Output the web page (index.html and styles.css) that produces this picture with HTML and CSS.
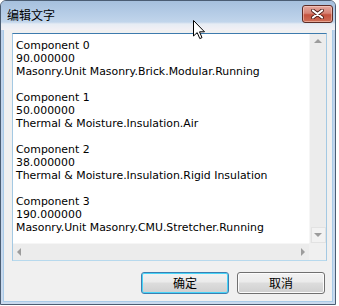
FILE: index.html
```html
<!DOCTYPE html>
<html lang="zh-CN">
  <head>
    <meta charset="UTF-8" />
    <title>编辑文字</title>
    <link rel="stylesheet" href="styles.css">
  </head>
  <body>
    <div class="window">
      <div class="titlebar">
        <span class="title">编辑文字</span>
        <button class="close" title="关闭">
          <svg width="15" height="10" viewBox="0 0 15 10">
            <path d="M3 1.5 L12 8.5 M12 1.5 L3 8.5" stroke="#4a1a14" stroke-width="3.8" stroke-linecap="round" />
            <path d="M3 1.5 L12 8.5 M12 1.5 L3 8.5" stroke="#ffffff" stroke-width="2.2" stroke-linecap="round" />
          </svg>
        </button>
      </div>

      <div class="client">
        <div class="textbox">
          <div class="content">
            <div>Component 0</div>
            <div>90.000000</div>
            <div>Masonry.Unit Masonry.Brick.Modular.Running</div>
            <div>&nbsp;</div>
            <div>Component 1</div>
            <div>50.000000</div>
            <div>Thermal &amp; Moisture.Insulation.Air</div>
            <div>&nbsp;</div>
            <div>Component 2</div>
            <div>38.000000</div>
            <div>Thermal &amp; Moisture.Insulation.Rigid Insulation</div>
            <div>&nbsp;</div>
            <div>Component 3</div>
            <div>190.000000</div>
            <div>Masonry.Unit Masonry.CMU.Stretcher.Running</div>
          </div>
          <!-- 滚动条（禁用状态） -->
          <div class="vscroll">
            <div class="arrow up"></div>
            <div class="arrow-btn"><div class="arrow down"></div></div>
          </div>
          <div class="hscroll">
            <div class="arrow left"></div>
            <div class="arrow right"></div>
          </div>
          <div class="corner"></div>
        </div>

        <div class="actions">
          <button class="btn default">确定</button>
          <button class="btn">取消</button>
        </div>
      </div>

      <svg class="cursor" width="13" height="20" viewBox="0 0 13 20">
        <path d="M0.5 0.5 L0.5 16 L4.2 12.6 L6.8 18.6 L9 17.6 L6.5 11.8 L11.5 11.8 Z" fill="#ffffff" stroke="#000000" stroke-width="1" stroke-linejoin="miter" />
      </svg>
    </div>
  </body>
</html>
```

FILE: styles.css
```css
body {
  margin: 0;
  background: #ffffff;
}

.window {
  position: relative;
  width: 336px;
  height: 305px;
  box-sizing: border-box;
  border: 1px solid #4b5d73;
  border-radius: 6px 6px 0 0;
  padding: 0 2px 2px 2px;
  background: linear-gradient(#bcd1ea, #c9daee);
  display: flex;
  flex-direction: column;
  font-family: "DejaVu Sans", sans-serif;
}

.titlebar {
  height: 29px;
  margin: 0 -2px;
  padding: 0 2px 0 6px;
  display: flex;
  align-items: flex-start;
  justify-content: space-between;
  background: linear-gradient(#a6c0dd 0px, #b5cce6 12px, #c1d5eb 21px, #e6ecf4 23px, #f2f0f5 29px);
  border-radius: 5px 5px 0 0;
}

.title {
  margin-top: 5px;
  font-family: "Noto Sans CJK SC", sans-serif;
  font-size: 12px;
  line-height: 17px;
  color: #000000;
}

.close {
  margin-top: 4px;
  width: 31px;
  height: 18px;
  padding: 0;
  border: 1px solid #5b2b26;
  border-radius: 3px;
  background: linear-gradient(#e4a89f, #d68375 45%, #c4523f 55%, #cf6e57);
  box-shadow: inset 0 0 0 1px rgba(255, 220, 210, 0.5);
  display: flex;
  align-items: center;
  justify-content: center;
}

.client {
  flex: 1;
  background: #f0f0f0;
  border: 1px solid #a9cbe8;
  border-top: none;
  padding: 3px 4px 7px 8px;
  display: flex;
  flex-direction: column;
}

.textbox {
  width: 315px;
  height: 228px;
  box-sizing: border-box;
  border: 1px solid #a4c9e3;
  border-top-color: #3d7bad;
  border-bottom-color: #b7d9ed;
  background: #ffffff;
  display: grid;
  grid-template-columns: 1fr 17px;
  grid-template-rows: 1fr 17px;
}

.content {
  padding: 5px 0 0 3px;
  font-size: 10.9px;
  line-height: 13px;
  color: #000000;
  white-space: nowrap;
  overflow: hidden;
}

.vscroll {
  background: #ececec;
  border-left: 1px solid #f6f6f6;
  display: flex;
  flex-direction: column;
  justify-content: space-between;
  align-items: center;
}

.hscroll {
  background: #ececec;
  border-top: 1px solid #f6f6f6;
  display: flex;
  justify-content: space-between;
  align-items: center;
  padding: 0 4px;
}

.corner {
  background: #f0f0f0;
}

.arrow-btn {
  width: 15px;
  height: 16px;
  box-sizing: border-box;
  border: 1px solid #e2e2e2;
  background: #f2f2f2;
  display: flex;
  align-items: center;
  justify-content: center;
}

.arrow {
  width: 0;
  height: 0;
  border: 4px solid transparent;
}

.arrow.up {
  margin-top: 5px;
  border-top: none;
  border-bottom: 4px solid #9c9c9c;
}

.arrow.down {
  border-bottom: none;
  border-top: 4px solid #9c9c9c;
}

.arrow.left {
  border-left: none;
  border-right: 4px solid #9c9c9c;
}

.arrow.right {
  border-right: none;
  border-left: 4px solid #9c9c9c;
}

.actions {
  margin-top: 11px;
  padding-right: 3px;
  display: flex;
  justify-content: flex-end;
  gap: 8px;
}

.btn {
  width: 88px;
  height: 22px;
  padding: 0;
  border: 1px solid #707070;
  border-radius: 3px;
  background: linear-gradient(#f2f2f2, #ebebeb 45%, #dddddd 50%, #cfcfcf);
  box-shadow: inset 0 0 0 1px #fcfcfc;
  font-family: "Noto Sans CJK SC", sans-serif;
  font-size: 12px;
  line-height: 18px;
  color: #000000;
}

.btn.default {
  border-color: #3c7fb1;
  box-shadow: inset 0 0 0 1px #48d4f8;
}

.cursor {
  position: absolute;
  left: 192px;
  top: 19px;
}
```
